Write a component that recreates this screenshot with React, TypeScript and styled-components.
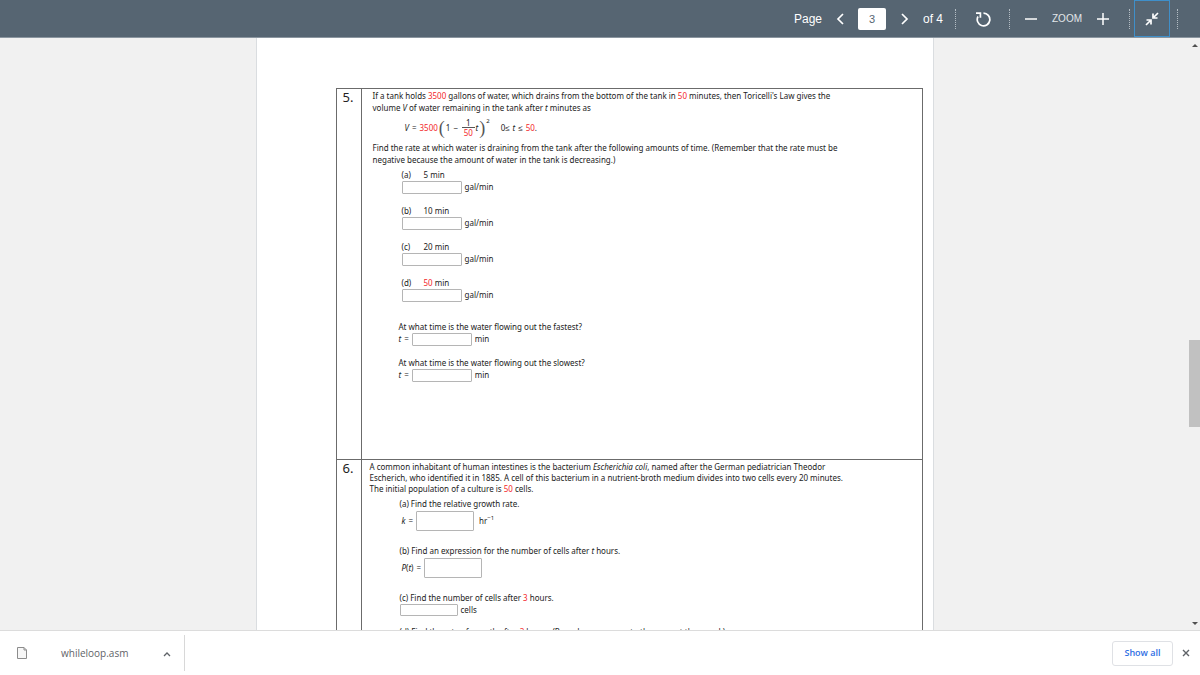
import React from "react";
import styled, { createGlobalStyle } from "styled-components";

const Global = createGlobalStyle`
  *, *::before, *::after { box-sizing: border-box; }
  body { margin: 0; background: #fff; font-family: "Noto Sans", Verdana, sans-serif; }
  button, input { font: inherit; color: inherit; margin: 0; padding: 0; }
  button { border: 0; background: none; }
  p { margin: 0; }
`;

const Shell = styled.div`
  display: flex;
  flex-direction: column;
  height: 100vh;
`;

const Toolbar = styled.header`
  display: flex;
  align-items: center;
  justify-content: flex-end;
  flex: none;
  height: 38px;
  padding-right: 22px;
  background: #566572;
  border-bottom: 1px solid #8b96a0;
  color: #fff;
  font: 12px/16px "Liberation Sans", Arial, sans-serif;
`;

const ToolButton = styled.button<{ $w: number; $active?: boolean }>`
  display: flex;
  align-items: center;
  justify-content: center;
  width: ${(p) => p.$w}px;
  height: 37px;
  border: 1px solid ${(p) => (p.$active ? "#3f8fc9" : "transparent")};
`;

const PageInput = styled.input`
  width: 28px;
  height: 22px;
  margin: 0 5px 0 4px;
  border: 0;
  border-radius: 2px;
  background: #fff;
  color: #566572;
  font-size: 11px;
  text-align: center;
`;

const PageLabel = styled.label`
  margin-right: 4px;
`;

const Total = styled.span`
  margin: 0 12px 0 4px;
`;

const ZoomText = styled.span`
  width: 40px;
  color: #e3e7ea;
  font-size: 10px;
  text-align: center;
`;

const Divider = styled.span<{ $before?: number; $after?: number }>`
  width: 1px;
  height: 20px;
  margin: 0 ${(p) => p.$after ?? 0}px 0 ${(p) => p.$before ?? 0}px;
  border-left: 1px dotted #b4bdc4;
`;

const Viewer = styled.main`
  display: flex;
  flex: 1;
  min-height: 0;
  background: #f1f1f1;
`;

const Canvas = styled.div`
  display: flex;
  justify-content: center;
  flex: 1;
  overflow: hidden;
`;

const Sheet = styled.article`
  width: 100%;
  max-width: 678px;
  height: max-content;
  padding: 50px 10px 60px 79px;
  border: solid #dadde0;
  border-width: 0 1px;
  background: #fff;
`;

const ScrollTrack = styled.div`
  display: flex;
  flex-direction: column;
  align-items: center;
  flex: none;
  width: 11px;
  padding: 5px 0 4px;
`;

const ScrollThumb = styled.div`
  width: 11px;
  height: 87px;
  margin: 293px 0 auto;
  background: #c1c1c1;
`;

const Questions = styled.table`
  width: 100%;
  border-collapse: collapse;
  color: #222;
  font-size: 8px;
  line-height: 12px;
`;

const NumberCell = styled.th`
  width: 25px;
  padding: 0 0 0 6px;
  border: 1px solid #6b6b6b;
  font: 13px/16px "Noto Sans", sans-serif;
  text-align: left;
  vertical-align: top;
`;

const BodyCell = styled.td<{ $indent: number; $h: number }>`
  height: ${(p) => p.$h}px;
  padding: 1px 0 0 ${(p) => p.$indent}px;
  border: 1px solid #6b6b6b;
  vertical-align: top;
  white-space: nowrap;
`;

const Red = styled.span`
  color: #f3272b;
`;

const Intro = styled.p<{ $tight?: boolean }>`
  line-height: ${(p) => (p.$tight ? 11 : 12)}px;
`;

const Formula = styled.div`
  display: flex;
  align-items: center;
  gap: 1px;
  height: 22px;
  margin: 3px 0 3px 32px;
`;

const Terms = styled.span<{ $before?: number }>`
  display: flex;
  gap: 3px;
  margin-left: ${(p) => p.$before ?? 0}px;
`;

const Paren = styled.span`
  color: #555;
  font: 18px/20px "Liberation Serif", serif;
`;

const Fraction = styled.span`
  display: flex;
  flex-direction: column;
  align-items: center;
  margin-left: 3px;
  line-height: 10px;
`;

const Numerator = styled.span`
  height: 9px;
  padding: 0 4px;
  border-bottom: 1px solid #555;
  line-height: 8px;
`;

const Power = styled.span`
  align-self: flex-start;
  font-size: 6px;
  line-height: 8px;
`;

const Part = styled.div<{ $left: number; $top: number }>`
  margin: ${(p) => p.$top}px 0 0 ${(p) => p.$left}px;
`;

const PartTag = styled.span`
  display: inline-block;
  width: 22px;
`;

const Line = styled.label<{ $h?: number; $left?: number }>`
  display: flex;
  align-items: center;
  gap: 3px;
  height: ${(p) => p.$h ?? 12}px;
  margin-left: ${(p) => p.$left ?? 0}px;
`;

const Answer = styled.input<{ $w: number; $h: number }>`
  width: ${(p) => p.$w}px;
  height: ${(p) => p.$h}px;
  border: 1px solid #b5b5b5;
  border-radius: 1px;
  background: #fff;
`;

const Unit = styled.span<{ $gap?: number }>`
  margin-left: ${(p) => p.$gap ?? 0}px;
  sup { font-size: 6px; line-height: 0; }
`;

const Downloads = styled.footer`
  display: flex;
  flex: none;
  align-items: center;
  height: 45px;
  padding-right: 9px;
  border-top: 1px solid #dcdcdc;
  background: #fff;
  color: #5f6368;
  font: 10px/14px "Open Sans", sans-serif;
`;

const FileItem = styled.div`
  display: flex;
  align-items: center;
  width: 185px;
  height: 36px;
  padding: 0 13px 0 17px;
  border-right: 1px solid #d8d8d8;
`;

const FileName = styled.a`
  flex: 1;
  margin-left: 34px;
  color: inherit;
  text-decoration: none;
`;

const ShowAll = styled.button`
  width: 61px;
  height: 25px;
  margin: 0 8px 0 auto;
  border: 1px solid #dfe1e5;
  border-radius: 3px;
  color: #2f6fe4;
  font-weight: 600;
  font-size: 9px;
`;

const Stroke = ({ d, w, h, sw = 1.5 }: { d: string; w: number; h: number; sw?: number }) => (
  <svg width={w} height={h} viewBox={`0 0 ${w} ${h}`} fill="none" stroke="currentColor" strokeWidth={sw} aria-hidden="true">
    <path d={d} />
  </svg>
);

const Arrow = ({ d }: { d: string }) => (
  <svg width="6" height="4" viewBox="0 0 6 4" fill="#505050" aria-hidden="true"><path d={d} /></svg>
);

const rates = [
  { tag: "(a)", time: <>5 min</> },
  { tag: "(b)", time: <>10 min</> },
  { tag: "(c)", time: <>20 min</> },
  { tag: "(d)", time: <><Red>50</Red> min</> },
];

export default function App() {
  return (
    <Shell>
      <Global />
      <Toolbar>
        <PageLabel htmlFor="page">Page</PageLabel>
        <ToolButton $w={28} aria-label="Previous page"><Stroke w={8} h={12} sw={1.7} d="M7 1 2 6l5 5" /></ToolButton>
        <PageInput id="page" defaultValue="3" />
        <ToolButton $w={28} aria-label="Next page"><Stroke w={8} h={12} sw={1.7} d="M1 1l5 5-5 5" /></ToolButton>
        <Total>of 4</Total>
        <Divider />
        <ToolButton $w={53} aria-label="Rotate">
          <Stroke w={16} h={16} sw={1.7} d="M8.500 2.200A6.300 6.300 0 1 1 3 5.500M1 2.200H5.400V6.800" />
        </ToolButton>
        <Divider $after={5} />
        <ToolButton $w={32} aria-label="Zoom out"><Stroke w={12} h={12} d="M0 6h12" /></ToolButton>
        <ZoomText>ZOOM</ZoomText>
        <ToolButton $w={32} aria-label="Zoom in"><Stroke w={12} h={12} d="M0 6h12M6 0v12" /></ToolButton>
        <Divider $before={10} $after={4} />
        <ToolButton $w={36} $active aria-label="Exit full screen">
          <svg width="14" height="14" viewBox="0 0 14 14" fill="none" stroke="#fff" strokeWidth="1.7" aria-hidden="true">
            <path d="M13 1 9 5M8 1.500V6h4.500M1 13l4-4M1.500 8H6v4.500" />
          </svg>
        </ToolButton>
        <Divider $before={7} />
      </Toolbar>

      <Viewer>
        <Canvas>
          <Sheet>
            <Questions>
              <tbody>
                <tr>
                  <NumberCell scope="row">5.</NumberCell>
                  <BodyCell $indent={11} $h={371}>
                    <Intro>If a tank holds <Red>3500</Red> gallons of water, which drains from the bottom of the tank in <Red>50</Red> minutes, then Toricelli's Law gives the<br />
                      volume <i>V</i> of water remaining in the tank after <i>t</i> minutes as</Intro>
                    <Formula>
                      <Terms><i>V</i><span>=</span><Red>3500</Red></Terms>
                      <Paren>(</Paren><Terms><span>1</span><span>−</span></Terms>
                      <Fraction><Numerator>1</Numerator><Red>50</Red></Fraction>
                      <i>t</i><Paren>)</Paren><Power>2</Power>
                      <Terms $before={10}><span>0≤</span><i>t</i><span>≤</span><span><Red>50</Red>.</span></Terms>
                    </Formula>
                    <Intro>Find the rate at which water is draining from the tank after the following amounts of time. (Remember that the rate must be<br />
                      negative because the amount of water in the tank is decreasing.)</Intro>
                    {rates.map((r, i) => (
                      <Part key={r.tag} $left={29} $top={i ? 12 : 3}>
                        <div><PartTag>{r.tag}</PartTag>{r.time}</div>
                        <Line><Answer $w={60} $h={13} />gal/min</Line>
                      </Part>
                    ))}
                    {["fastest", "slowest"].map((s, i) => (
                      <Part key={s} $left={26} $top={i ? 12 : 20}>
                        <p>At what time is the water flowing out the {s}?</p>
                        <Line><Terms><i>t</i><span>=</span></Terms><Answer $w={60} $h={13} />min</Line>
                      </Part>
                    ))}
                  </BodyCell>
                </tr>
                <tr>
                  <NumberCell scope="row">6.</NumberCell>
                  <BodyCell $indent={8} $h={240}>
                    <Intro $tight>A common inhabitant of human intestines is the bacterium <i>Escherichia coli</i>, named after the German pediatrician Theodor<br />
                      Escherich, who identified it in 1885. A cell of this bacterium in a nutrient-broth medium divides into two cells every 20 minutes.<br />
                      The initial population of a culture is <Red>50</Red> cells.</Intro>
                    <Part $left={30} $top={4}>
                      <p>(a) Find the relative growth rate.</p>
                      <Line $h={22} $left={2}><Terms><i>k</i><span>=</span></Terms><Answer $w={58} $h={20} /><Unit $gap={2}>hr<sup>−1</sup></Unit></Line>
                    </Part>
                    <Part $left={30} $top={13}>
                      <p>(b) Find an expression for the number of cells after <i>t</i> hours.</p>
                      <Line $h={22} $left={2}><Terms><span><i>P</i>(<i>t</i>)</span><span>=</span></Terms><Answer $w={58} $h={20} /></Line>
                    </Part>
                    <Part $left={30} $top={13}>
                      <p>(c) Find the number of cells after <Red>3</Red> hours.</p>
                      <Line><Answer $w={58} $h={12} />cells</Line>
                    </Part>
                    <Part $left={30} $top={10}>
                      <p>(d) Find the rate of growth after <Red>3</Red> hours. (Round your answer to the nearest thousand.)</p>
                    </Part>
                  </BodyCell>
                </tr>
              </tbody>
            </Questions>
          </Sheet>
        </Canvas>
        <ScrollTrack>
          <Arrow d="M0 4 3 1l3 3z" />
          <ScrollThumb />
          <Arrow d="M0 0l3 3 3-3z" />
        </ScrollTrack>
      </Viewer>

      <Downloads>
        <FileItem>
          <svg width="10" height="12" viewBox="0 0 10 12" fill="#f7f7f7" stroke="#8c8c8c" aria-hidden="true">
            <path d="M.5.5H7L9.500 3v8.500H.5zM7 .5V3h2.500" />
          </svg>
          <FileName href="#">whileloop.asm</FileName>
          <button aria-label="File options"><Stroke w={8} h={6} sw={1.3} d="M1 5l3-3 3 3" /></button>
        </FileItem>
        <ShowAll>Show all</ShowAll>
        <button aria-label="Close downloads"><Stroke w={10} h={8} sw={1.400} d="M2 1l6 6M8 1 2 7" /></button>
      </Downloads>
    </Shell>
  );
}
